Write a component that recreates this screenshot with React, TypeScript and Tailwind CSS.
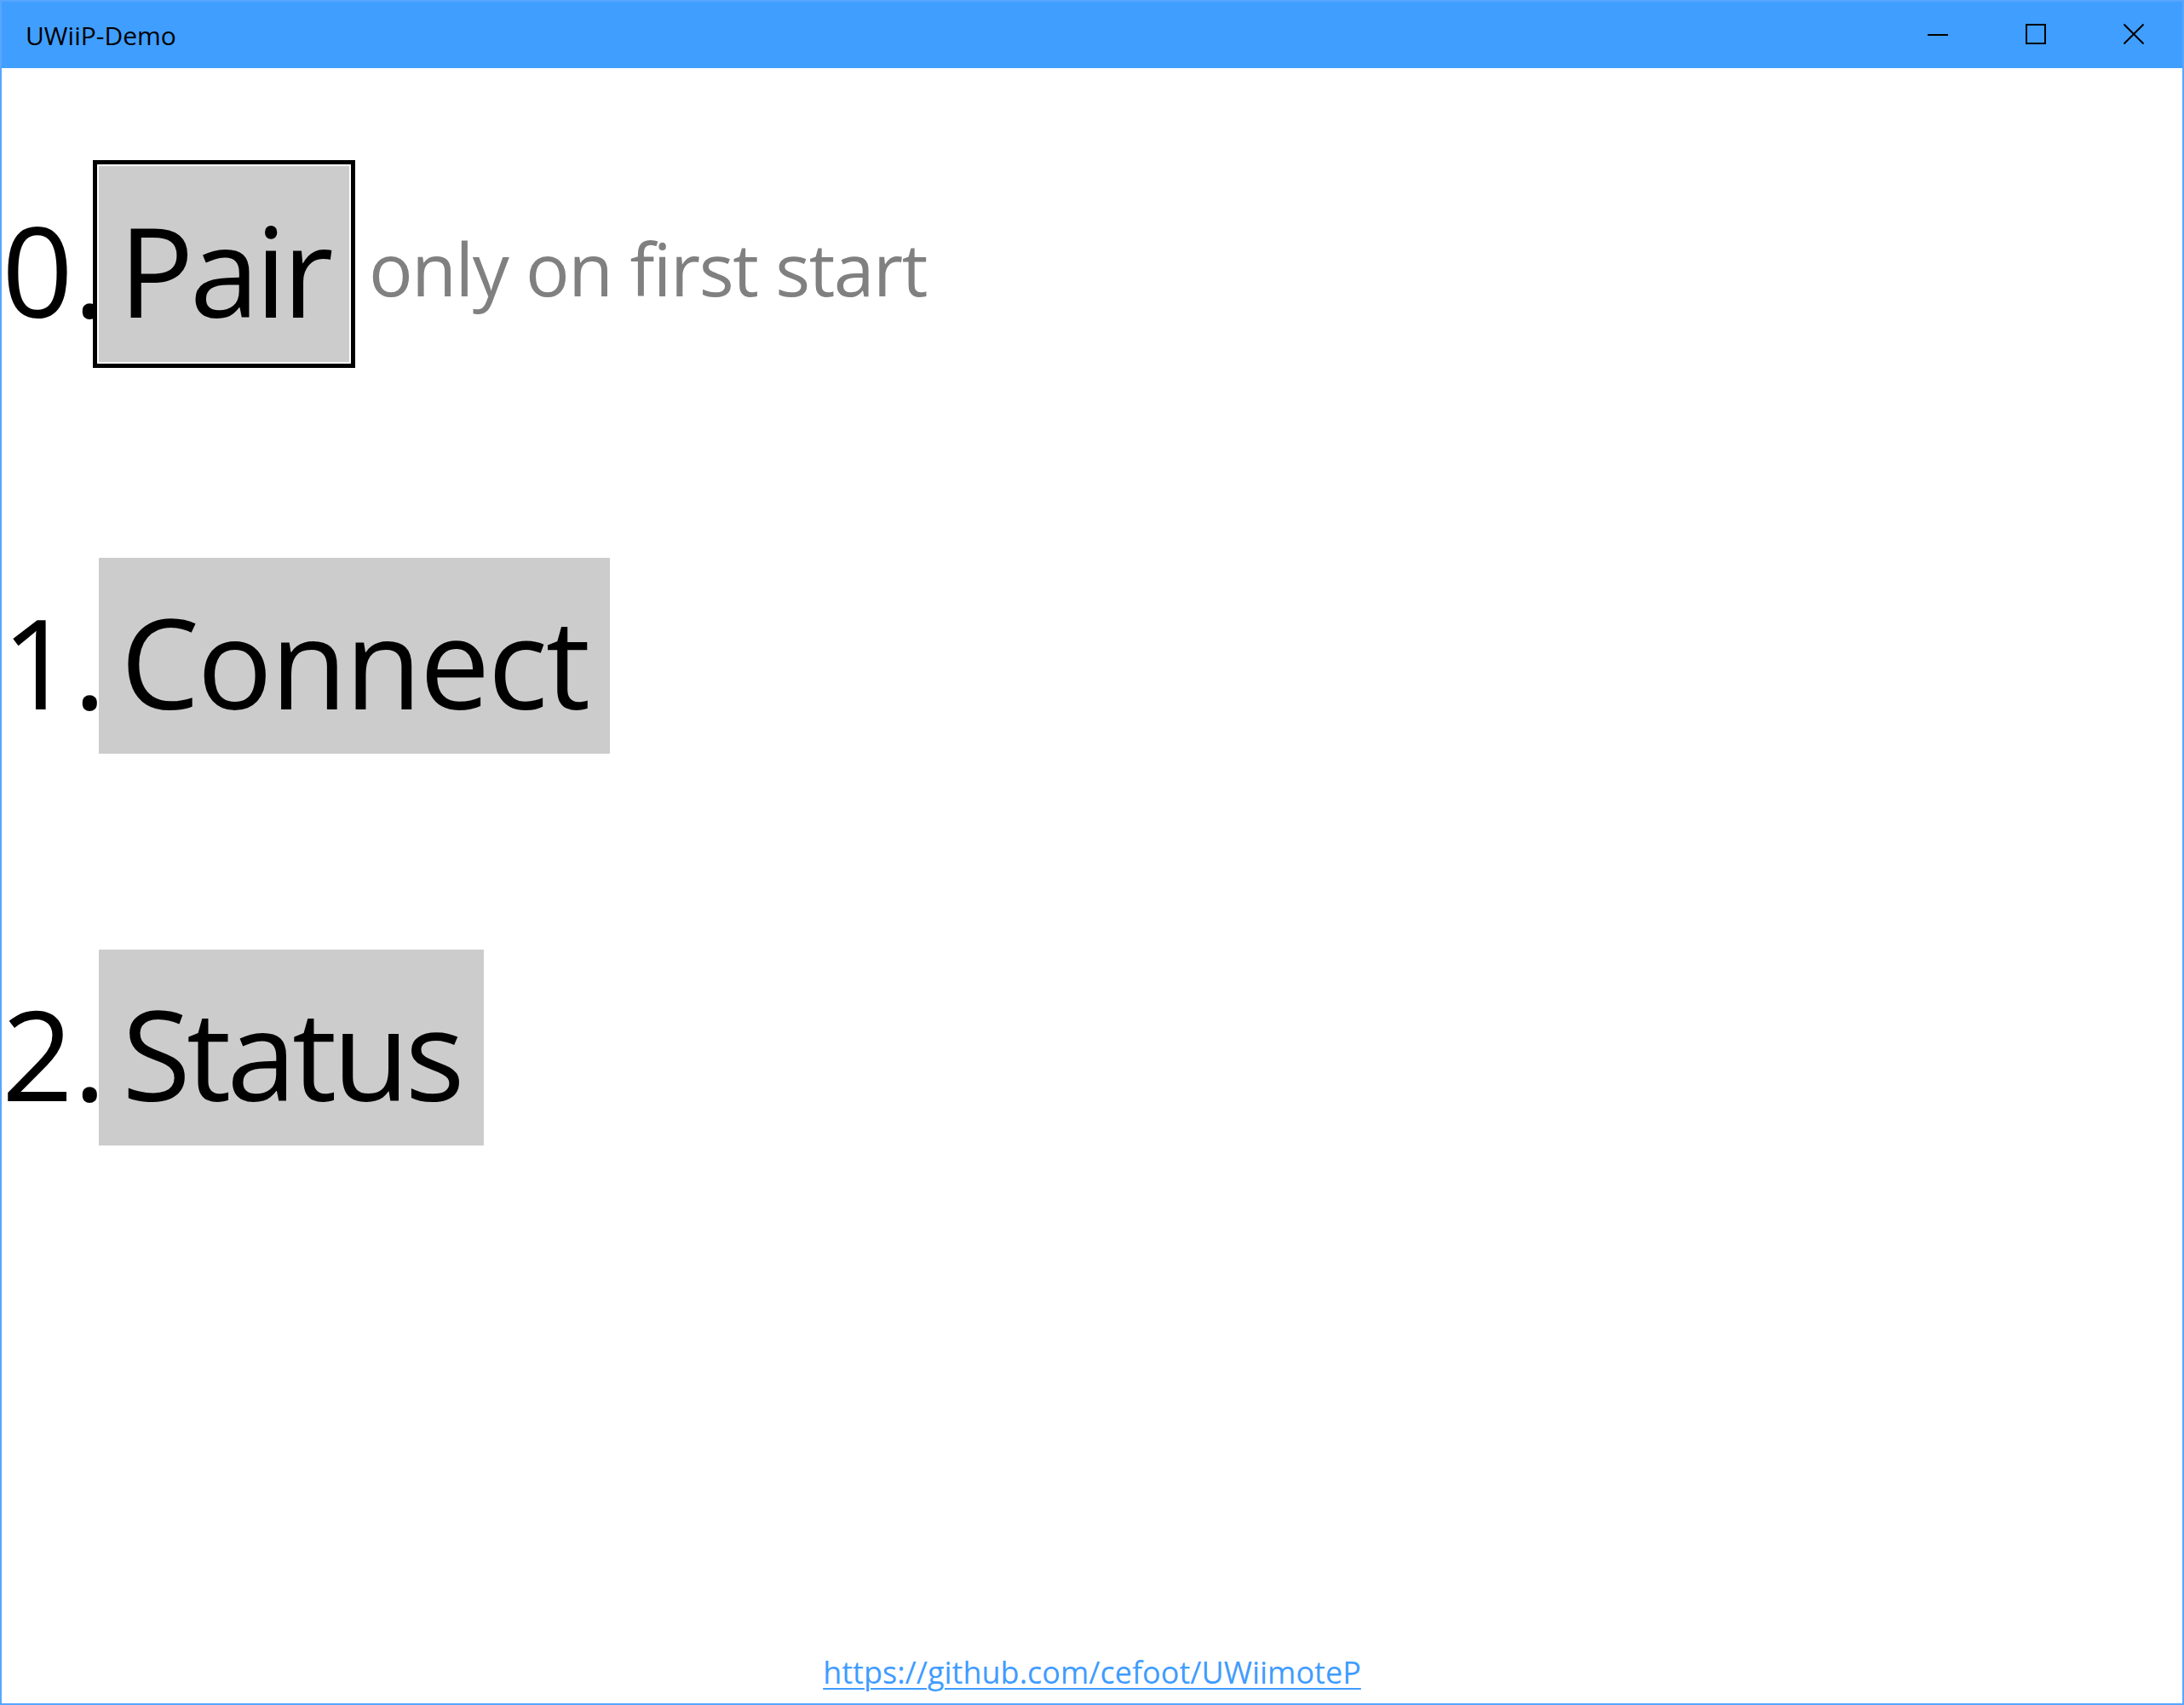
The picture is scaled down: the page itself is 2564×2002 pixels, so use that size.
import React from "react";

const font = { fontFamily: '"Open Sans", "Noto Sans", sans-serif' };

function Row({
  num,
  label,
  width,
  tracking,
  focused,
  hint,
}: {
  num: string;
  label: string;
  width: string;
  tracking: string;
  focused?: boolean;
  hint?: string;
}) {
  return (
    <div className="flex h-[460px] items-center">
      <span className="w-[114px] shrink-0 pt-[12px] text-[147px] leading-[200px] text-black">
        {num}
      </span>
      <div
        className={
          "flex h-[230px] shrink-0 items-center justify-center bg-[#cccccc] " +
          width +
          (focused ? " shadow-[0_0_0_2px_#ffffff,0_0_0_7px_#000000]" : "")
        }
      >
        <span className={"pt-[12px] text-[147px] leading-[200px] text-black " + tracking}>
          {label}
        </span>
      </div>
      {hint && (
        <span className="ml-[23px] pt-[8px] text-[86px] leading-[117px] tracking-[-1.5px] text-[#808080]">
          {hint}
        </span>
      )}
    </div>
  );
}

export default function App() {
  return (
    <div
      style={font}
      className="box-border flex h-[2002px] w-[2564px] flex-col overflow-hidden border-2 border-[#56a6ff] bg-white"
    >
      <div className="flex h-[78px] shrink-0 items-center bg-[#409eff]">
        <span className="flex-1 pl-[28px] text-[30px] text-black">UWiiP-Demo</span>
        <div className="flex h-full">
          <div className="flex h-full w-[115px] items-center justify-center">
            <svg width="24" height="2" viewBox="0 0 24 2">
              <rect width="24" height="2" fill="#000" />
            </svg>
          </div>
          <div className="flex h-full w-[115px] items-center justify-center pb-[3px]">
            <svg width="24" height="24" viewBox="0 0 24 24">
              <rect x="1" y="1" width="22" height="22" fill="none" stroke="#000" strokeWidth="2" />
            </svg>
          </div>
          <div className="flex h-full w-[115px] items-center justify-center pb-[3px]">
            <svg width="24" height="24" viewBox="0 0 24 24">
              <path d="M0.5 0.5 L23.5 23.5 M23.5 0.5 L0.5 23.5" stroke="#000" strokeWidth="2" fill="none" />
            </svg>
          </div>
        </div>
      </div>
      <div className="flex flex-1 flex-col">
        <Row num="0." label="Pair" width="w-[294px]" tracking="tracking-[-5px]" focused hint="only on first start" />
        <Row num="1." label="Connect" width="w-[600px]" tracking="tracking-[-2.5px]" />
        <Row num="2." label="Status" width="w-[452px]" tracking="tracking-[-5px]" />
        <div className="flex-1" />
        <div className="flex justify-center pb-[12px]">
          <a
            href="#"
            className="text-[36px] leading-[49px] text-[#3f9cff] underline decoration-2 underline-offset-[5px]"
          >
            https://github.com/cefoot/UWiimoteP
          </a>
        </div>
      </div>
    </div>
  );
}
